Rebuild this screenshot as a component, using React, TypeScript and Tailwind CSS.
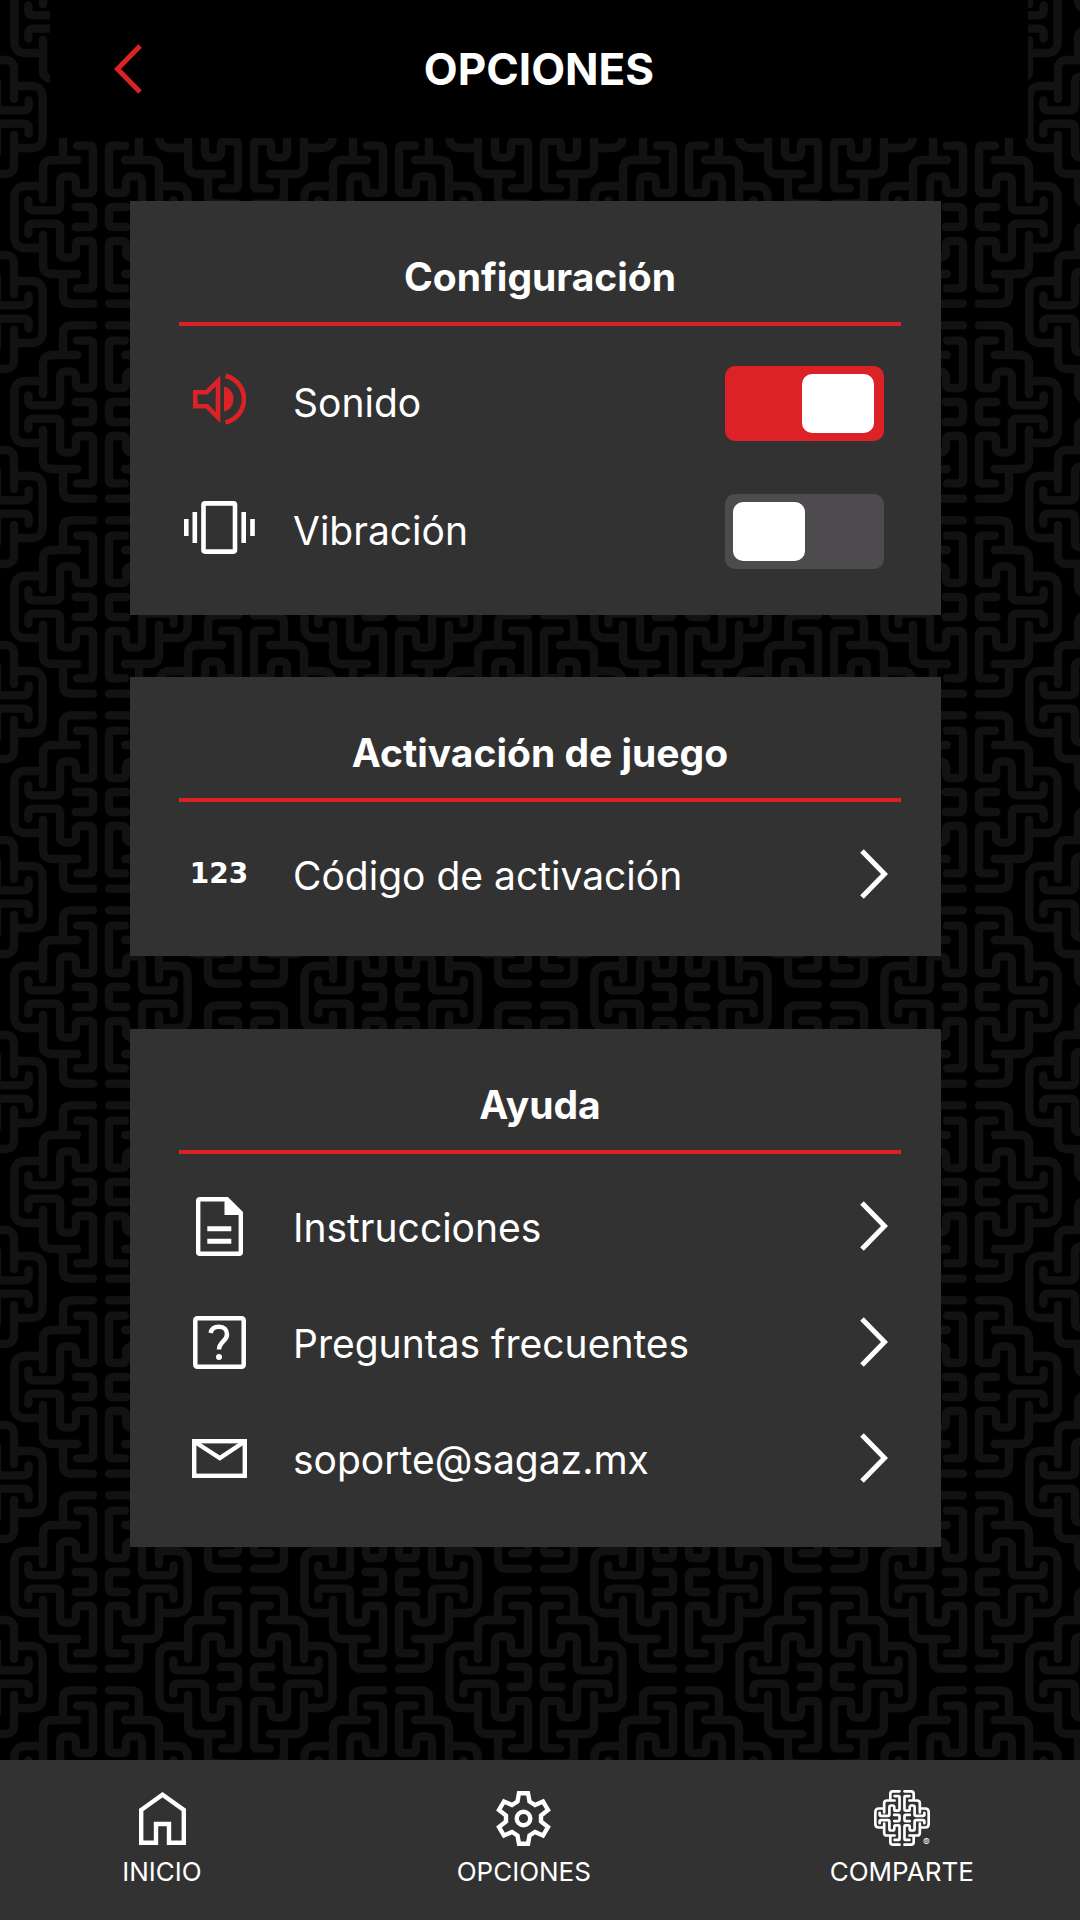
import React, { useState } from 'react';

// One half of the knot; the other half is the same path mirrored
const KNOT_HALF =
  'M-24-260H-88Q-114-260-114-234V-172 M-72-214H-34Q-24-214-24-204V-82Q-24-72-34-72H-63Q-75-72-75-84V-104Q-75-122-93-122H-105Q-123-122-123-104V-34Q-123-20-137-20H-204Q-218-20-218-34V-50 ' +
  'M-72-171H-146Q-174-171-174-143V-54 M-174-93H-225Q-260-93-260-58V58Q-260 93-225 93H-174 ' +
  'M-76-30H-36Q-24-30-24-18V18Q-24 30-36 30H-76 ' +
  'M-24 260H-88Q-114 260-114 234V172 M-72 214H-34Q-24 214-24 204V82Q-24 72-34 72H-63Q-75 72-75 84V104Q-75 122-93 122H-105Q-123 122-123 104V34Q-123 20-137 20H-204Q-218 20-218 34V50 ' +
  'M-72 171H-146Q-174 171-174 143V54';

const Knot: React.FC = () => (
  <>
    <path d={KNOT_HALF} />
    <path d={KNOT_HALF} transform="scale(-1 1)" />
  </>
);

const KNOT_CENTERS = [
  [145, 98],
  [0, -2],
  [290, -2],
  [0, 193],
  [290, 193],
];

const Backdrop: React.FC = () => (
  <svg className="absolute inset-0 h-full w-full" aria-hidden="true">
    <defs>
      <pattern id="knots" x="-44" y="-76" width="290" height="195" patternUnits="userSpaceOnUse">
        <g fill="none" stroke="#121212" strokeWidth="25" strokeLinecap="round">
          {KNOT_CENTERS.map(([x, y], index) => (
            <g key={index} transform={`translate(${x} ${y}) scale(0.3333)`}>
              <Knot />
            </g>
          ))}
        </g>
      </pattern>
    </defs>
    <rect width="100%" height="100%" fill="url(#knots)" />
  </svg>
);

const SoundIcon: React.FC = () => (
  <svg width="53" height="53" viewBox="0 0 53 53" fill="none" stroke="#dc2226" strokeWidth="4.6" aria-hidden="true">
    <path d="M2.3 19.3H13.5L25 8V44.5L14 33.3H2.3Z" />
    <path d="M31 13.5C38 15 40.5 21 40.5 26S38 37 31 38.5Z" fill="#dc2226" stroke="none" />
    <path d="M32.5 2.8A24 24 0 0 1 32.5 49.5" />
  </svg>
);

const VibrationIcon: React.FC = () => (
  <svg width="71" height="53" viewBox="0 0 71 53" fill="none" stroke="#fff" strokeWidth="4.6" aria-hidden="true">
    <rect x="19.5" y="2.4" width="31.5" height="48.2" rx="1.5" />
    <path d="M2.3 18V35M10.8 11V42M59.7 11V42M68.5 18V35" />
  </svg>
);

const DocumentIcon: React.FC = () => (
  <svg width="47" height="59" viewBox="0 0 47 59" fill="none" stroke="#fff" strokeWidth="4.4" aria-hidden="true">
    <path d="M3.7 2.2H31L44.8 16V55.3Q44.8 56.8 43.3 56.8H3.7Q2.2 56.8 2.2 55.3V3.7Q2.2 2.2 3.7 2.2Z" />
    <path d="M28.5 1H31L46 16V18H28.5Z" fill="#fff" stroke="none" />
    <path d="M11.3 31.7H35.3M11.3 44.3H35.3" strokeWidth="5" />
  </svg>
);

const HelpIcon: React.FC = () => (
  <svg width="53" height="53" viewBox="0 0 53 53" fill="none" stroke="#fff" strokeWidth="4.5" aria-hidden="true">
    <rect x="2.3" y="2.3" width="48.4" height="48.4" rx="2" />
    <path d="M17.5 17C18.5 12.5 22 10.8 26 10.8C31 10.8 34 14 34 18.5C34 25 26 26 26 33.5" />
    <circle cx="26" cy="41" r="3" fill="#fff" stroke="none" />
  </svg>
);

const MailIcon: React.FC = () => (
  <svg width="55" height="39" viewBox="0 0 55 39" fill="none" stroke="#fff" strokeWidth="4.4" aria-hidden="true">
    <rect x="2.2" y="2.2" width="50.6" height="34.6" />
    <path d="M3 3L27.8 19L52 3" />
  </svg>
);

const NumbersIcon: React.FC = () => (
  <span className="font-['DejaVu_Sans',sans-serif] text-[28px] font-bold" aria-hidden="true">
    123
  </span>
);

const HomeIcon: React.FC = () => (
  <svg width="47" height="53" viewBox="0 0 47 53" fill="none" stroke="#fff" strokeWidth="4.4" aria-hidden="true">
    <path d="M2.2 18L23.5 2.8L44.8 18V50.8H30V32H17V50.8H2.2Z" />
  </svg>
);

const GearIcon: React.FC = () => (
  <svg width="55" height="55" viewBox="0 0 55 55" fill="none" stroke="#fff" strokeWidth="4.4" aria-hidden="true">
    <path d="M23 2.2H32L33.5 10.5L39 14L47 10.5L52 19L45 24.5V30.5L52 36L47 44.5L39 41L33.5 44.5L32 52.8H23L21.5 44.5L16 41L8 44.5L3 36L10 30.5V24.5L3 19L8 10.5L16 14L21.5 10.5Z" />
    <circle cx="27.5" cy="27.5" r="6.8" />
  </svg>
);

const KnotIcon: React.FC = () => (
  <span className="relative">
    <svg width="56" height="56" viewBox="-273 -273 546 546" fill="none" stroke="#fff" strokeWidth="26" strokeLinecap="round" aria-hidden="true">
      <Knot />
    </svg>
    <span className="absolute right-0 bottom-0 text-[10px] leading-[8px]">®</span>
  </span>
);

const Chevron: React.FC<{ left?: boolean }> = ({ left }) => (
  <svg width="28" height="50" viewBox="0 0 28 50" fill="none" stroke="currentColor" strokeWidth="5" aria-hidden="true">
    <path d={left ? 'M26 2L3.5 25L26 48' : 'M2 2L24.5 25L2 48'} />
  </svg>
);

interface CardProps {
  title: string;
  className: string;
  children: React.ReactNode;
}

const Card: React.FC<CardProps> = ({ title, className, children }) => (
  <section className={`bg-[#323232] pr-10 pl-[49px] ${className}`}>
    <h2 className="border-b-4 border-[#dc2226] pt-12 pb-[17px] text-center text-[39px] leading-[56px] font-bold">
      {title}
    </h2>
    {children}
  </section>
);

interface RowProps {
  icon: React.ReactNode;
  label: string;
}

const ToggleRow: React.FC<RowProps & { checked: boolean; onChange: (value: boolean) => void }> = ({
  icon,
  label,
  checked,
  onChange,
}) => (
  <label className="flex h-32 cursor-pointer items-center gap-[34px] pr-[17px]">
    <span className="flex w-20 shrink-0 justify-center pb-2">{icon}</span>
    <span className="flex-1 text-[39px] leading-[56px]">{label}</span>
    <input
      type="checkbox"
      role="switch"
      checked={checked}
      onChange={(e) => onChange(e.target.checked)}
      className="flex h-[75px] w-[159px] shrink-0 cursor-pointer appearance-none items-center rounded-[10px] bg-[#4e4b4e] pr-[10px] pl-2 before:h-[59px] before:w-[72px] before:rounded-[10px] before:bg-white before:content-[''] checked:justify-end checked:bg-[#dc2226]"
    />
  </label>
);

const LinkRow: React.FC<RowProps & { href: string }> = ({ icon, label, href }) => (
  <a href={href} className="flex h-[116px] items-center gap-[34px] pr-[13px]">
    <span className="flex w-20 shrink-0 justify-center pb-1">{icon}</span>
    <span className="flex-1 text-[39px] leading-[56px]">{label}</span>
    <span className="pb-1">
      <Chevron />
    </span>
  </a>
);

const NAV_ITEMS = [
  { label: 'INICIO', icon: <HomeIcon /> },
  { label: 'OPCIONES', icon: <GearIcon /> },
  { label: 'COMPARTE', icon: <KnotIcon /> },
];

const App: React.FC = () => {
  const [sound, setSound] = useState(true);
  const [vibration, setVibration] = useState(false);

  return (
    <div className="relative flex min-h-screen flex-col bg-black font-['Inter',sans-serif] text-white">
      <Backdrop />

      {/* Header */}
      <header className="relative mr-[52px] ml-[50px] grid h-[138px] grid-cols-[92px_1fr_92px] items-center bg-black">
        <button type="button" aria-label="Volver" className="cursor-pointer justify-self-end text-[#dc2226]">
          <Chevron left />
        </button>
        <h1 className="text-center text-[44px] leading-[56px] font-bold">OPCIONES</h1>
      </header>

      {/* Cards */}
      <main className="relative mr-[139px] mb-16 ml-[130px] pt-[63px]">
        <Card title="Configuración" className="pb-5">
          <div className="pt-[13px]">
            <ToggleRow icon={<SoundIcon />} label="Sonido" checked={sound} onChange={setSound} />
            <ToggleRow icon={<VibrationIcon />} label="Vibración" checked={vibration} onChange={setVibration} />
          </div>
        </Card>

        <Card title="Activación de juego" className="mt-[62px] pb-[22px]">
          <div className="pt-4">
            <LinkRow icon={<NumbersIcon />} label="Código de activación" href="#codigo" />
          </div>
        </Card>

        <Card title="Ayuda" className="mt-[73px] pb-[29px]">
          <div className="pt-4">
            <LinkRow icon={<DocumentIcon />} label="Instrucciones" href="#instrucciones" />
            <LinkRow icon={<HelpIcon />} label="Preguntas frecuentes" href="#preguntas" />
            <LinkRow icon={<MailIcon />} label="soporte@sagaz.mx" href="mailto:soporte@sagaz.mx" />
          </div>
        </Card>
      </main>

      {/* Bottom navigation */}
      <nav className="relative mt-auto grid h-40 grid-cols-[30fr_37fr_33fr] bg-[#323232] pt-[30px]">
        {NAV_ITEMS.map((item) => (
          <button key={item.label} type="button" className="flex cursor-pointer flex-col items-center gap-2">
            <span className="flex h-14 items-center">{item.icon}</span>
            <span className="text-[26px] leading-9">{item.label}</span>
          </button>
        ))}
      </nav>
    </div>
  );
};

export default App;
